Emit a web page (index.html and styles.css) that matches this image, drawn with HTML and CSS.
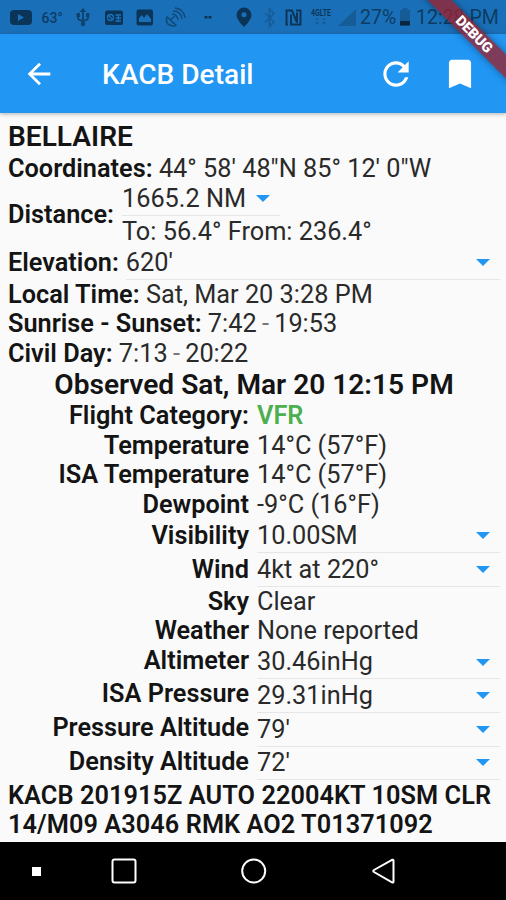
FILE: index.html
```
<!DOCTYPE html>
<html lang="en">
<head>
  <meta charset="UTF-8" />
  <meta name="viewport" content="width=device-width, initial-scale=1.0" />
  <title>KACB Detail</title>
  <link rel="stylesheet" href="styles.css">
</head>
<body>
  <!-- Status bar -->
  <div class="status-bar">
    <svg class="status-icons" width="260" height="34" viewBox="0 0 260 34">
      <rect x="10" y="10" width="22" height="15" rx="4" fill="#0b3558"/>
      <path d="M18 14v7l6-3.500z" fill="#1a70b8"/>
      <text x="41.500" y="23" class="temp">63°</text>
      <g stroke="#0f4470" stroke-width="2" fill="none">
        <path d="M83 11v13M78 14v4q0 2 5 3q5-1 5-3v-4"/>
      </g>
      <path d="M79.500 12L83 8l3.500 4zM76.500 13h3.500v4h-3.500zM86 13h3.500v4H86z" fill="#0f4470"/>
      <circle cx="83" cy="24" r="2.300" fill="#0f4470"/>
      <rect x="105" y="10.500" width="18" height="14.500" rx="2" fill="#0b3558"/>
      <g stroke="#1a70b8" stroke-width="1.300" fill="none">
        <circle cx="110.500" cy="17.500" r="3"/>
        <path d="M108 15l5 5M115.500 15h5.500M115.500 18h5.500M115.500 21h5.500M118.300 14v8"/>
      </g>
      <rect x="136.500" y="9.500" width="16.500" height="16" rx="2" fill="#0b3558"/>
      <path d="M139 22v-4l3-3 2 3 3-4 4 5v3z" fill="#1a70b8"/>
      <g stroke="#104a79" stroke-width="1.500" fill="none">
        <path d="M167 17q-3 8 7 9q2 0 2-1zM170 20l5-4M173 23l-3-4"/>
        <path d="M172 14q5 0 6 6M173 11q8 0 9 8M175 8q9 1 10 10"/>
      </g>
      <path d="M204.500 16h3v2.500h-3zM208.500 16h3v2.500h-3z" fill="#0b3558"/>
      <path d="M244 7.500a7.500 7.500 0 0 0-7.500 7.500c0 5 7.500 12 7.500 12s7.500-7 7.500-12a7.500 7.500 0 0 0-7.500-7.500z" fill="#0b3558"/>
      <circle cx="244" cy="14.700" r="2.500" fill="#1a70b8"/>
    </svg>
    <svg class="status-icons" width="98" height="34" viewBox="260 0 98 34">
      <path d="M265 13l9 9-4.500 4.500V9l4.500 4.500-9 9" fill="none" stroke="#155d99" stroke-width="1.700"/>
      <path d="M288 24.500h-1.500v-14h5.500l5 12v-10M291 14.500v10h9.500v-14H296" fill="none" stroke="#0b3558" stroke-width="2"/>
      <text x="311" y="16" class="carrier" textLength="20" lengthAdjust="spacingAndGlyphs">4GLTE</text>
      <path d="M315 20h4l-2-2zM315 22h4l-2 3zM322 20h4l-2-2zM322 22h4l-2 3z" fill="#155b96"/>
      <path d="M338 26L356 9v17z" fill="#165c97"/>
    </svg>
    <span class="battery-text">27%</span>
    <svg class="battery" width="12" height="18" viewBox="0 0 12 18">
      <path d="M3.500 0h5v2H11v15.500H1V2h2.500z" fill="#155b96"/>
      <path d="M1 13h10v4.500H1z" fill="#08263f"/>
    </svg>
    <span class="clock">12:28 PM</span>
  </div>

  <!-- App bar -->
  <header class="app-bar">
    <svg class="back" width="34" height="34" viewBox="0 0 24 24">
      <path d="M20 11H7.830l5.590-5.590L12 4l-8 8 8 8 1.410-1.410L7.830 13H20v-2z"/>
    </svg>
    <h1>KACB Detail</h1>
    <svg class="refresh" width="38" height="38" viewBox="0 0 24 24">
      <path d="M17.650 6.350C16.200 4.900 14.210 4 12 4c-4.420 0-7.990 3.580-7.990 8s3.570 8 7.990 8c3.730 0 6.840-2.550 7.730-6h-2.080c-.82 2.330-3.040 4-5.650 4-3.310 0-6-2.690-6-6s2.690-6 6-6c1.660 0 3.140.69 4.220 1.780L13 11h7V4l-2.350 2.350z"/>
    </svg>
    <svg class="bookmark" width="38" height="38" viewBox="0 0 24 24">
      <path d="M17 3H7c-1.100 0-1.990.9-1.990 2L5 21l7-3 7 3V5c0-1.100-.9-2-2-2z"/>
    </svg>
  </header>
  <div class="ribbon">DEBUG</div>

  <main class="detail">
    <h2>BELLAIRE</h2>
    <div class="line"><b>Coordinates: </b>44° 58' 48"N 85° 12' 0"W</div>
    <div class="distance">
      <b>Distance:</b>
      <div>
        <div class="select short">1665.2 NM<i class="arrow"></i></div>
        <div class="line">To: 56.4° From: 236.4°</div>
      </div>
    </div>
    <div class="elevation">
      <b>Elevation:</b>
      <div class="select">620'<i class="arrow"></i></div>
    </div>
    <div class="line"><b>Local Time: </b>Sat, Mar 20 3:28 PM</div>
    <div class="line"><b>Sunrise - Sunset: </b>7:42 <span class="dash">-</span> 19:53</div>
    <div class="line"><b>Civil Day: </b>7:13 <span class="dash">-</span> 20:22</div>

    <h2 class="observed">Observed Sat, Mar 20 12:15 PM</h2>
    <div class="report">
      <b>Flight Category:</b><span class="vfr">VFR</span>
      <b>Temperature</b><span>14°C (57°F)</span>
      <b>ISA Temperature</b><span>14°C (57°F)</span>
      <b>Dewpoint</b><span>-9°C (16°F)</span>
      <b class="mid">Visibility</b><div class="select">10.00SM<i class="arrow"></i></div>
      <b class="mid">Wind</b><div class="select">4kt at 220°<i class="arrow"></i></div>
      <b>Sky</b><span>Clear</span>
      <b>Weather</b><span>None reported</span>
      <b>Altimeter</b><div class="select">30.46inHg<i class="arrow"></i></div>
      <b>ISA Pressure</b><div class="select">29.31inHg<i class="arrow"></i></div>
      <b>Pressure Altitude</b><div class="select">79'<i class="arrow"></i></div>
      <b>Density Altitude</b><div class="select">72'<i class="arrow"></i></div>
    </div>
    <p class="metar">KACB 201915Z AUTO 22004KT 10SM CLR<br>14/M09 A3046 RMK AO2 T01371092</p>
  </main>

  <!-- Android navigation -->
  <nav class="nav-bar">
    <svg width="506" height="58" viewBox="0 0 506 58" fill="none" stroke="#fff" stroke-width="2">
      <rect x="32" y="25" width="9" height="9" fill="#fff" stroke="none"/>
      <rect x="112.500" y="17.500" width="23" height="23" rx="2"/>
      <circle cx="253.700" cy="29" r="11.500"/>
      <path d="M393.500 19v20.500q0 1.500-1.500 .8L374 30q-1.500-1 0-2l18-10.200q1.500-.6 1.500 1.200z"/>
    </svg>
  </nav>
</body>
</html>
```

FILE: styles.css
```
* {
  box-sizing: border-box;
}

html, body {
  margin: 0;
  padding: 0;
  width: 506px;
  height: 900px;
  overflow: hidden;
}

body {
  position: relative;
  display: flex;
  flex-direction: column;
  background: #fafafa;
  color: #2a2a2a;
  font-family: Roboto, "Liberation Sans", sans-serif;
  font-size: 25.3px;
  line-height: 29.6px;
  font-weight: 400;
}

b {
  color: #141414;
  font-weight: 600;
}

.status-bar {
  flex: none;
  height: 34px;
  display: flex;
  align-items: center;
  background: #1a70b8;
  color: #0d3c63;
  font-size: 19.5px;
  font-weight: 400;
  white-space: nowrap;
}

.status-icons {
  flex: none;
}

.temp {
  font-size: 14px;
  font-weight: 500;
  fill: #0d3c63;
}

.carrier {
  font-size: 9px;
  font-weight: 700;
  fill: #0b3558;
}

.battery-text {
  width: 41px;
  padding-left: 2px;
  padding-top: 2px;
}

.battery {
  flex: none;
}

.clock {
  padding-left: 5px;
  padding-top: 2px;
}

.app-bar {
  flex: none;
  height: 79px;
  display: flex;
  align-items: center;
  padding-left: 22px;
  background: #2196f3;
  color: #fff;
  box-shadow: 0 1px 4px rgba(0, 0, 0, 0.3);
}

.app-bar svg {
  flex: none;
  fill: #fff;
}

.app-bar h1 {
  width: 275px;
  margin: 2px 0 0 46px;
  font-size: 28.1px;
  font-weight: 500;
}

.app-bar .bookmark {
  margin-left: 26px;
}

.ribbon {
  position: absolute;
  left: 412px;
  top: 26px;
  width: 124px;
  height: 17px;
  transform: rotate(45deg);
  background: rgba(158, 30, 42, 0.76);
  box-shadow: 0 0 7px rgba(0, 0, 0, 0.4);
  color: #fff;
  font-size: 14.3px;
  line-height: 17px;
  font-weight: 900;
  text-align: center;
}

.detail {
  flex: 1;
  padding: 8px 6px 0 8px;
  white-space: nowrap;
}

.detail h2 {
  margin: 0;
  color: #141414;
  font-size: 28.1px;
  line-height: 32.5px;
  font-weight: 600;
}

.detail .observed {
  text-align: center;
}

.distance {
  display: flex;
  align-items: center;
  gap: 8px;
}

.elevation {
  display: flex;
  align-items: center;
  gap: 7px;
}

.elevation .select {
  flex: 1;
}

.select {
  height: 33.6px;
  display: flex;
  align-items: center;
  justify-content: space-between;
  padding-right: 10px;
  border-bottom: 1px solid #e6e6e6;
}

.short {
  width: 158px;
  height: 32.5px;
  margin-bottom: 1px;
}

.arrow {
  border: 7px solid transparent;
  border-top-color: #2196f3;
  border-bottom: 0;
}

.dash {
  color: #777;
  margin: 0 -1px;
}

.report {
  display: grid;
  grid-template-columns: 241px 1fr;
  column-gap: 8px;
}

.report b {
  text-align: right;
}

.report .mid {
  align-self: center;
}

.report .vfr {
  color: #4caf50;
  font-weight: 600;
}

.metar {
  margin: 0;
  padding-top: 0.6px;
  color: #141414;
  font-weight: 600;
  letter-spacing: 0.07px;
}

.nav-bar {
  flex: none;
  height: 58px;
  background: #000;
}

.nav-bar svg {
  display: block;
}
```
